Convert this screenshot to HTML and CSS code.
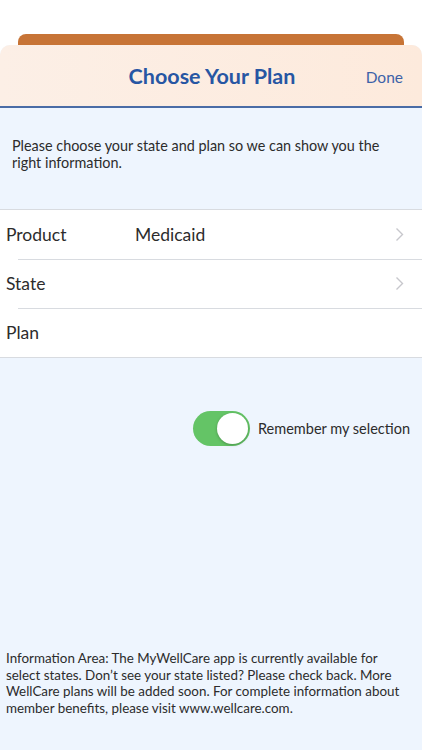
FILE: index.html
```html
<!DOCTYPE html>
<html lang="en">
<head>
    <meta charset="UTF-8">
    <meta name="viewport" content="width=device-width, initial-scale=1.0">
    <title>Choose Your Plan</title>
    <link rel="stylesheet" href="styles.css">
</head>
<body>
    <div class="top-space"></div>
    <div class="sheet-tab"></div>
    <div class="sheet">
        <header class="nav-bar">
            <h1>Choose Your Plan</h1>
            <span class="done">Done</span>
        </header>
        <p class="intro">Please choose your state and plan so we can show you the right information.</p>
        <ul class="table">
            <li class="row">
                <span class="row-label">Product</span>
                <span class="row-value">Medicaid</span>
                <svg class="chevron" width="9" height="15" viewBox="0 0 9 15"><path d="M1.5 1.5 L7.5 7.5 L1.5 13.5" fill="none" stroke="#c7c7cc" stroke-width="1.4"/></svg>
            </li>
            <li class="row">
                <span class="row-label">State</span>
                <span class="row-value"></span>
                <svg class="chevron" width="9" height="15" viewBox="0 0 9 15"><path d="M1.5 1.5 L7.5 7.5 L1.5 13.5" fill="none" stroke="#c7c7cc" stroke-width="1.4"/></svg>
            </li>
            <li class="row">
                <span class="row-label">Plan</span>
            </li>
        </ul>
        <div class="remember">
            <span class="switch"><span class="knob"></span></span>
            <span class="remember-label">Remember my selection</span>
        </div>
        <p class="info">Information Area: The MyWellCare app is currently available for select states. Don’t see your state listed? Please check back. More WellCare plans will be added soon. For complete information about member benefits, please visit www.wellcare.com.</p>
    </div>
</body>
</html>
```

FILE: styles.css
```css
body {
    margin: 0;
    font-family: Lato, "Open Sans", sans-serif;
    background-color: #ffffff;
    color: #333;
    width: 422px;
    height: 750px;
    overflow: hidden;
}
.top-space {
    height: 34px;
}
.sheet-tab {
    margin: 0 18px;
    height: 14px;
    background-color: #c77436;
    border-radius: 8px 8px 0 0;
}
.sheet {
    margin-top: -3px;
    background-color: #eef5fe;
    border-radius: 10px 10px 0 0;
    height: 705px;
    display: flex;
    flex-direction: column;
}
.nav-bar {
    height: 61px;
    display: flex;
    align-items: center;
    justify-content: center;
    position: relative;
    background: linear-gradient(90deg, #fcefe6 0%, #fdeadc 100%);
    border-radius: 10px 10px 0 0;
    border-bottom: 2px solid #4a6ca6;
}
.nav-bar h1 {
    margin: 0 0 0 2px;
    font-size: 21.5px;
    font-weight: 700;
    color: #2756a3;
}
.done {
    position: absolute;
    right: 19px;
    top: 23px;
    font-size: 15.5px;
    color: #3c62a8;
}
.intro {
    margin: 29px 12px 0;
    font-size: 14.4px;
    line-height: 17px;
    color: #2c2c2c;
}
.table {
    list-style: none;
    margin: 38px 0 0;
    padding: 0;
    background-color: #ffffff;
    border-top: 1px solid #d8dbe0;
    border-bottom: 1px solid #d8dbe0;
}
.row {
    height: 49px;
    display: flex;
    align-items: center;
    padding-left: 6px;
    padding-right: 18px;
    position: relative;
}
.row + .row::before {
    content: "";
    position: absolute;
    left: 18px;
    right: 0;
    top: 0;
    border-top: 1px solid #d8dbe0;
}
.row-label {
    width: 129px;
    font-size: 17.5px;
    color: #2c2c2c;
}
.row-value {
    flex: 1;
    font-size: 17.5px;
    color: #2c2c2c;
}
.remember {
    margin-top: 53px;
    display: flex;
    align-items: center;
    justify-content: flex-end;
    padding-right: 12px;
    gap: 8px;
}
.switch {
    width: 57px;
    height: 35px;
    border-radius: 18px;
    background-color: #64c466;
    display: flex;
    align-items: center;
    justify-content: flex-end;
    padding: 0 2px;
    box-sizing: border-box;
}
.knob {
    width: 31px;
    height: 31px;
    border-radius: 50%;
    background-color: #ffffff;
    box-shadow: 0 1px 3px rgba(0,0,0,0.25);
}
.remember-label {
    font-size: 14.5px;
    color: #2c2c2c;
}
.info {
    margin: auto 14px 34px 6px;
    font-size: 13.4px;
    line-height: 16.4px;
    color: #2c2c2c;
}
```
